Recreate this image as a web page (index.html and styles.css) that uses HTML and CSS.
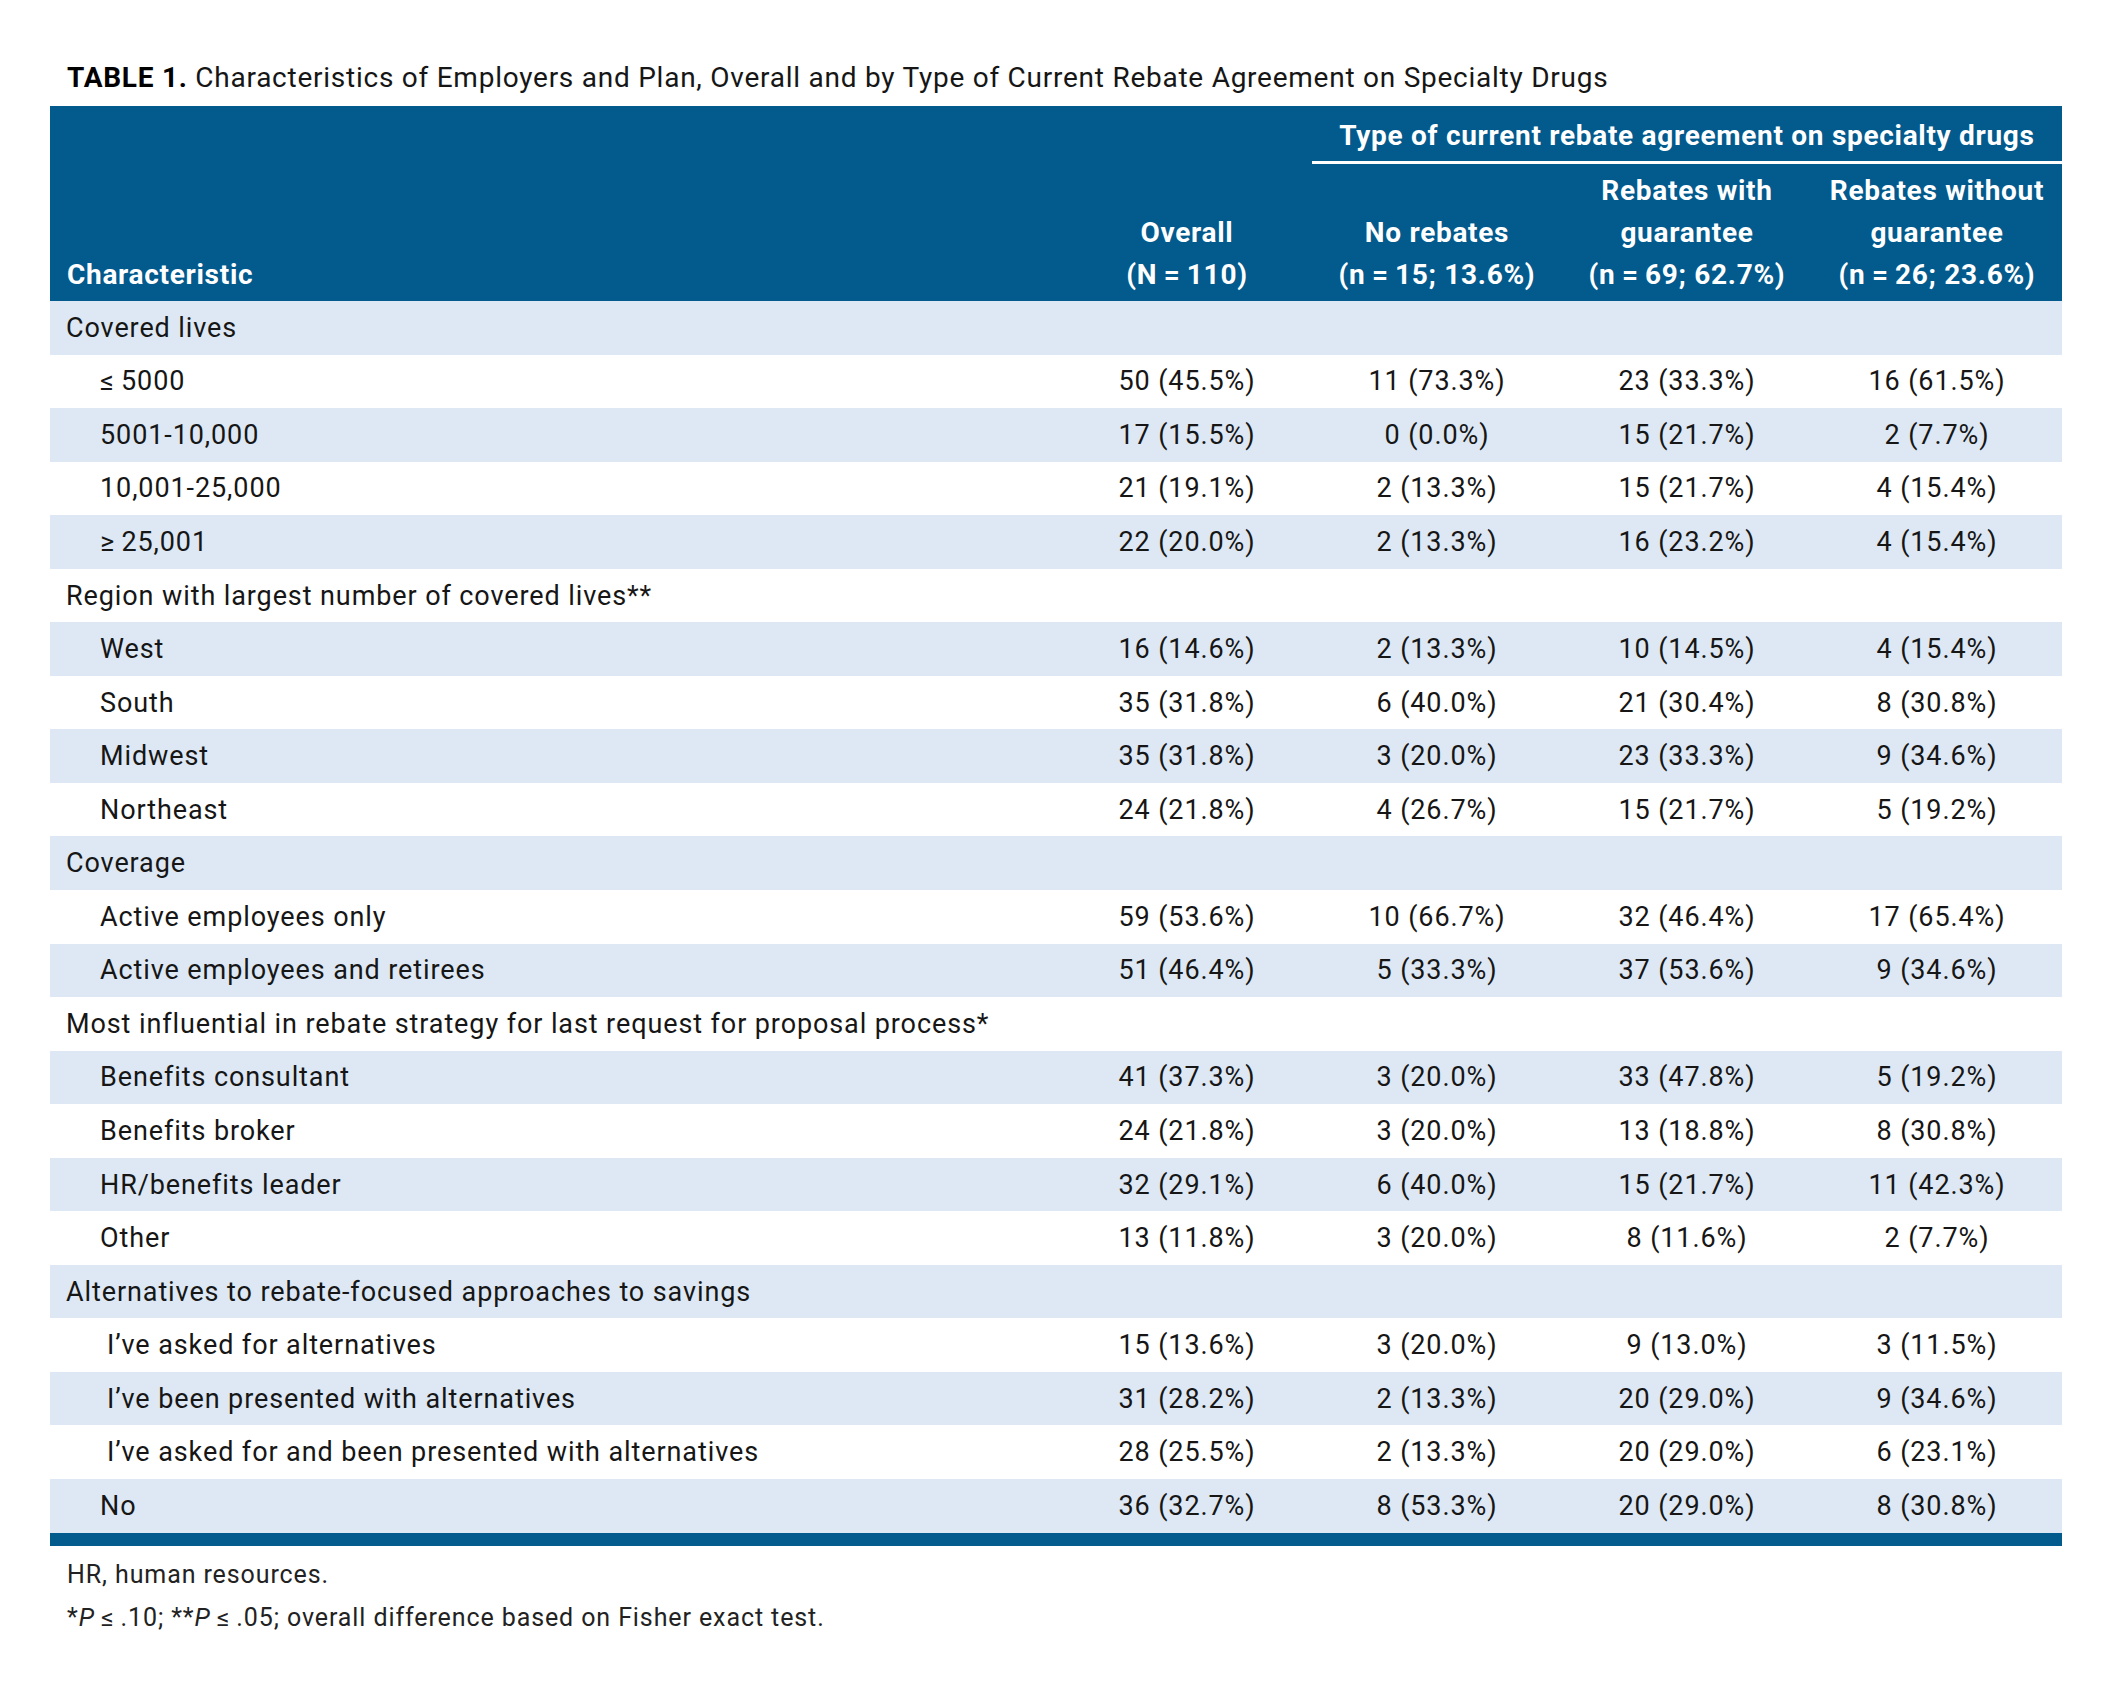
FILE: index.html
```html
<!DOCTYPE html>
<html lang="en">
<head>
<meta charset="utf-8">
<title>Table 1</title>
<link rel="stylesheet" href="styles.css">
</head>
<body>
<div class="page">
  <h1 class="caption"><b>TABLE 1.</b> Characteristics of Employers and Plan, Overall and by Type of Current Rebate Agreement on Specialty Drugs</h1>
  <table class="data">
    <colgroup>
      <col class="c-char">
      <col class="c-num">
      <col class="c-num">
      <col class="c-num">
      <col class="c-num">
    </colgroup>
    <thead>
      <tr class="h1">
        <th></th>
        <th></th>
        <th colspan="3" class="span">Type of current rebate agreement on specialty drugs</th>
      </tr>
      <tr class="h2">
        <th class="left">Characteristic</th>
        <th>Overall<br>(N&#8201;=&#8201;110)</th>
        <th>No rebates<br>(n&#8201;=&#8201;15; 13.6%)</th>
        <th>Rebates with<br>guarantee<br>(n&#8201;=&#8201;69; 62.7%)</th>
        <th>Rebates without<br>guarantee<br>(n&#8201;=&#8201;26; 23.6%)</th>
      </tr>
    </thead>
    <tbody>
      <tr><td class="cat">Covered lives</td><td></td><td></td><td></td><td></td></tr>
      <tr><td class="sub">≤&#8201;5000</td><td>50 (45.5%)</td><td>11 (73.3%)</td><td>23 (33.3%)</td><td>16 (61.5%)</td></tr>
      <tr><td class="sub">5001-10,000</td><td>17 (15.5%)</td><td>0 (0.0%)</td><td>15 (21.7%)</td><td>2 (7.7%)</td></tr>
      <tr><td class="sub">10,001-25,000</td><td>21 (19.1%)</td><td>2 (13.3%)</td><td>15 (21.7%)</td><td>4 (15.4%)</td></tr>
      <tr><td class="sub">≥&#8201;25,001</td><td>22 (20.0%)</td><td>2 (13.3%)</td><td>16 (23.2%)</td><td>4 (15.4%)</td></tr>
      <tr><td class="cat">Region with largest number of covered lives**</td><td></td><td></td><td></td><td></td></tr>
      <tr><td class="sub">West</td><td>16 (14.6%)</td><td>2 (13.3%)</td><td>10 (14.5%)</td><td>4 (15.4%)</td></tr>
      <tr><td class="sub">South</td><td>35 (31.8%)</td><td>6 (40.0%)</td><td>21 (30.4%)</td><td>8 (30.8%)</td></tr>
      <tr><td class="sub">Midwest</td><td>35 (31.8%)</td><td>3 (20.0%)</td><td>23 (33.3%)</td><td>9 (34.6%)</td></tr>
      <tr><td class="sub">Northeast</td><td>24 (21.8%)</td><td>4 (26.7%)</td><td>15 (21.7%)</td><td>5 (19.2%)</td></tr>
      <tr><td class="cat">Coverage</td><td></td><td></td><td></td><td></td></tr>
      <tr><td class="sub">Active employees only</td><td>59 (53.6%)</td><td>10 (66.7%)</td><td>32 (46.4%)</td><td>17 (65.4%)</td></tr>
      <tr><td class="sub">Active employees and retirees</td><td>51 (46.4%)</td><td>5 (33.3%)</td><td>37 (53.6%)</td><td>9 (34.6%)</td></tr>
      <tr><td class="cat">Most influential in rebate strategy for last request for proposal process*</td><td></td><td></td><td></td><td></td></tr>
      <tr><td class="sub">Benefits consultant</td><td>41 (37.3%)</td><td>3 (20.0%)</td><td>33 (47.8%)</td><td>5 (19.2%)</td></tr>
      <tr><td class="sub">Benefits broker</td><td>24 (21.8%)</td><td>3 (20.0%)</td><td>13 (18.8%)</td><td>8 (30.8%)</td></tr>
      <tr><td class="sub">HR/benefits leader</td><td>32 (29.1%)</td><td>6 (40.0%)</td><td>15 (21.7%)</td><td>11 (42.3%)</td></tr>
      <tr><td class="sub">Other</td><td>13 (11.8%)</td><td>3 (20.0%)</td><td>8 (11.6%)</td><td>2 (7.7%)</td></tr>
      <tr><td class="cat">Alternatives to rebate-focused approaches to savings</td><td></td><td></td><td></td><td></td></tr>
      <tr><td class="sub deep">I’ve asked for alternatives</td><td>15 (13.6%)</td><td>3 (20.0%)</td><td>9 (13.0%)</td><td>3 (11.5%)</td></tr>
      <tr><td class="sub deep">I’ve been presented with alternatives</td><td>31 (28.2%)</td><td>2 (13.3%)</td><td>20 (29.0%)</td><td>9 (34.6%)</td></tr>
      <tr><td class="sub deep">I’ve asked for and been presented with alternatives</td><td>28 (25.5%)</td><td>2 (13.3%)</td><td>20 (29.0%)</td><td>6 (23.1%)</td></tr>
      <tr><td class="sub">No</td><td>36 (32.7%)</td><td>8 (53.3%)</td><td>20 (29.0%)</td><td>8 (30.8%)</td></tr>
    </tbody>
  </table>
  <div class="notes">
    <p>HR, human resources.</p>
    <p>*<i>P</i>&#8201;≤&#8201;.10; **<i>P</i>&#8201;≤&#8201;.05; overall difference based on Fisher exact test.</p>
  </div>
</div>
</body>
</html>
```

FILE: styles.css
```css
html, body {
  margin: 0;
  padding: 0;
  background: #ffffff;
}

body {
  font-family: Roboto, "Liberation Sans", sans-serif;
  color: #161616;
}

.page {
  padding: 57px 51px 0 50px;
}

.caption {
  margin: 0 0 7px 17px;
  font-size: 28px;
  line-height: 42px;
  font-weight: 400;
  color: #161616;
  letter-spacing: 0.75px;
}

.caption b {
  font-weight: 700;
  color: #000;
}

.data {
  width: 2012px;
  border-collapse: collapse;
  table-layout: fixed;
  font-size: 27px;
  letter-spacing: 0.9px;
}

.c-char { width: 1012px; }
.c-num { width: 250px; }

.data thead th {
  background: #025a8d;
  color: #ffffff;
  font-weight: 700;
  font-size: 28px;
  letter-spacing: 0.7px;
  line-height: 42px;
  text-align: center;
  padding: 0;
}

.data .h1 th {
  padding: 9px 0 4px;
  height: 42px;
}

.data .h1 th.span {
  border-bottom: 3px solid #ffffff;
}

.data .h2 th {
  vertical-align: bottom;
  padding: 6px 0 5px;
}

.data .h2 th.left {
  text-align: left;
  padding-left: 17px;
}

.data tbody td {
  height: 53.56px;
  padding: 0;
  line-height: 30px;
  text-align: center;
  vertical-align: middle;
}

.data tbody tr:nth-child(odd) td {
  background: #dde8f4;
}

.data tbody tr:last-child td {
  border-bottom: 13px solid #025a8d;
}

.data tbody td.cat {
  text-align: left;
  padding-left: 16px;
}

.data tbody td.sub {
  text-align: left;
  padding-left: 50px;
}

.data tbody td.sub.deep {
  padding-left: 57px;
}

.notes {
  padding: 7px 0 0 17px;
  font-size: 25px;
  letter-spacing: 0.9px;
  color: #222;
}

.notes p {
  margin: 0;
  line-height: 43px;
}
```
